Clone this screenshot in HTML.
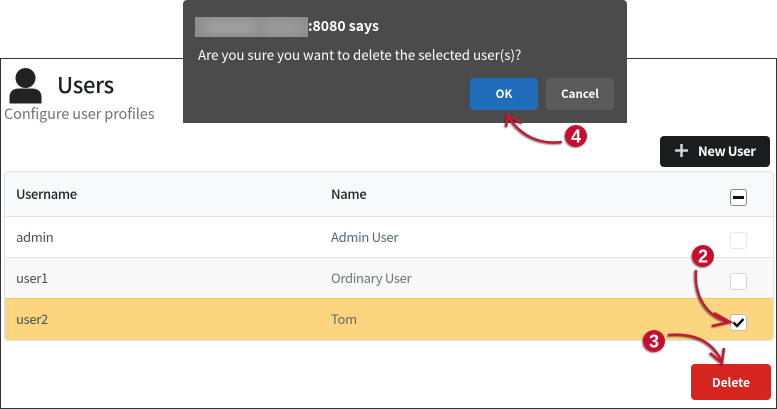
<!DOCTYPE html>
<html>
<head>
<meta charset="utf-8">
<style>
html,body{margin:0;padding:0;background:#fff}
body{width:777px;height:409px;position:relative;overflow:hidden;font-family:"Noto Sans CJK JP","Liberation Sans",sans-serif}
.a{position:absolute;white-space:nowrap}
.frame{position:absolute;left:0;top:58px;width:775px;height:349px;border:1px solid #333}
.t{position:absolute;font-size:13px;letter-spacing:-.3px;line-height:20px;white-space:nowrap}
.cb{position:absolute;left:730px;width:15px;height:15px;border:1px solid #d6d6d6;border-radius:3px;background:#fff}
.btn{position:absolute;border-radius:4px;color:#fff;font-weight:700;font-size:12.500px;text-align:center}
</style>
</head>
<body>
<div class="frame"></div>

<svg class="a" style="left:8px;top:67px" width="36" height="37" viewBox="0 0 36 37">
<circle cx="17.500" cy="11" r="10" fill="#222"/>
<path d="M1.500 36V30C1.500 24 6 21.500 11 21.500H24C29 21.500 33.500 24 33.500 30V36Q33.500 36.500 33 36.500H2Q1.500 36.500 1.500 36Z" fill="#222"/>
</svg>
<div class="a" style="left:57px;top:68px;font-size:22px;letter-spacing:-.3px;line-height:32px;font-weight:500;color:#1d2125">Users</div>
<div class="a" style="left:4px;top:103px;font-size:14.500px;letter-spacing:-.1px;line-height:22px;color:#6c757d">Configure user profiles</div>

<div class="btn" style="left:660px;top:136px;width:110px;height:31px;background:#1b1c1e;line-height:30px;font-size:13px;letter-spacing:-.4px"><span style="position:absolute;left:38px;top:0">New User</span>
<svg style="position:absolute;left:15px;top:8px" width="13" height="13"><path d="M6.500 0V13M0 6.500H13" stroke="#d0d0d0" stroke-width="2.600"/></svg></div>

<div class="a" style="left:4px;top:171px;width:768px;height:168px;border:1px solid #dee2e6;border-radius:4px;overflow:hidden;background:#fff">
  <div style="position:absolute;left:0;top:0;width:100%;height:44px;background:#f8f9fa;border-bottom:1px solid #dee2e6"></div>
  <div style="position:absolute;left:0;top:45px;width:100%;height:40px;background:#fff;border-bottom:1px solid #dee2e6"></div>
  <div style="position:absolute;left:0;top:86px;width:100%;height:40px;background:#f8f8f9;border-bottom:1px solid #e8c878"></div>
  <div style="position:absolute;left:0;top:127px;width:100%;height:41px;background:#fcd67f"></div>
</div>

<div class="t" style="left:16px;top:184px;font-weight:500;color:#212529;letter-spacing:-.35px">Username</div>
<div class="t" style="left:331px;top:184px;font-weight:500;color:#212529">Name</div>
<div class="t" style="left:16px;top:227px;color:#495057">admin</div>
<div class="t" style="left:331px;top:227px;color:#56677b">Admin User</div>
<div class="t" style="left:16px;top:268px;color:#495057">user1</div>
<div class="t" style="left:331px;top:268px;color:#6c757d">Ordinary User</div>
<div class="t" style="left:16px;top:309px;color:#495057">user2</div>
<div class="t" style="left:331px;top:309px;color:#5f6670">Tom</div>

<div class="cb" style="top:189px;border-color:#888"><div style="position:absolute;left:2px;top:6px;width:11px;height:3px;background:#111"></div></div>
<div class="cb" style="top:232px;border-color:#e8e8e8"></div>
<div class="cb" style="top:273px;border-color:#d4d4d4"></div>
<div class="cb" style="top:314px;border-color:#bbb"><svg style="position:absolute;left:1px;top:2px" width="13" height="11"><path d="M1.500 5.500L5 9L11.500 2" fill="none" stroke="#111" stroke-width="2.400"/></svg></div>

<div class="btn" style="left:691px;top:364px;width:80px;height:36px;background:#d6251f;line-height:37px;font-size:12px">Delete</div>

<div class="a" style="left:183px;top:0;width:444px;height:123px;background:#4b4b4b;border-radius:4px 4px 0 0"></div>
<div class="a" style="left:195px;top:17px;width:113px;height:20px;overflow:hidden;background:#8e8e8e">
  <div style="position:absolute;left:10px;top:5px;width:50px;height:10px;background:#a6a6a6;filter:blur(5px)"></div>
  <div style="position:absolute;left:68px;top:7px;width:38px;height:8px;background:#a2a2a2;filter:blur(5px)"></div>
</div>
<div class="a" style="left:308px;top:16px;font-size:14px;line-height:20px;font-weight:700;color:#fff">:8080 says</div>
<div class="a" style="left:198px;top:45px;font-size:13.300px;line-height:20px;color:#fff">Are you sure you want to delete the selected user(s)?</div>
<div class="btn" style="left:470px;top:78px;width:68px;height:32px;background:#1f6dbb;line-height:32px;font-size:11.500px">OK</div>
<div class="btn" style="left:546px;top:78px;width:68px;height:32px;background:#5a5a5a;line-height:32px;font-size:11.500px">Cancel</div>

<svg class="a" style="left:0;top:0" width="777" height="409" viewBox="0 0 777 409">
<defs><filter id="s" x="-30%" y="-30%" width="160%" height="160%"><feDropShadow dx="-1" dy="1" stdDeviation="0.800" flood-color="#000" flood-opacity="0.450"/></filter></defs>
<g fill="none" stroke="#c01a32" stroke-width="2.600" filter="url(#s)">
<path d="M696 270C694 295 705 316 729 322"/>
<path d="M714 313L730 322L712 326"/>
<path d="M668 335C692 333 712 340 722 362"/>
<path d="M710 353L722 363L724 348"/>
<path d="M562 142C540 145 520 136 508 116"/>
<path d="M506 127L508 115L522 123"/>
</g>
<g fill="#c8102e" filter="url(#s)">
<circle cx="703" cy="256" r="11"/>
<circle cx="654" cy="341" r="11"/>
<circle cx="576" cy="136" r="11"/>
</g>
<g fill="#fff" font-family="'Liberation Sans',sans-serif" font-size="18" font-weight="700" text-anchor="middle">
<text x="703" y="262.500">2</text>
<text x="654" y="347.500">3</text>
<text x="576" y="142.500">4</text>
</g>
</svg>
</body>
</html>
